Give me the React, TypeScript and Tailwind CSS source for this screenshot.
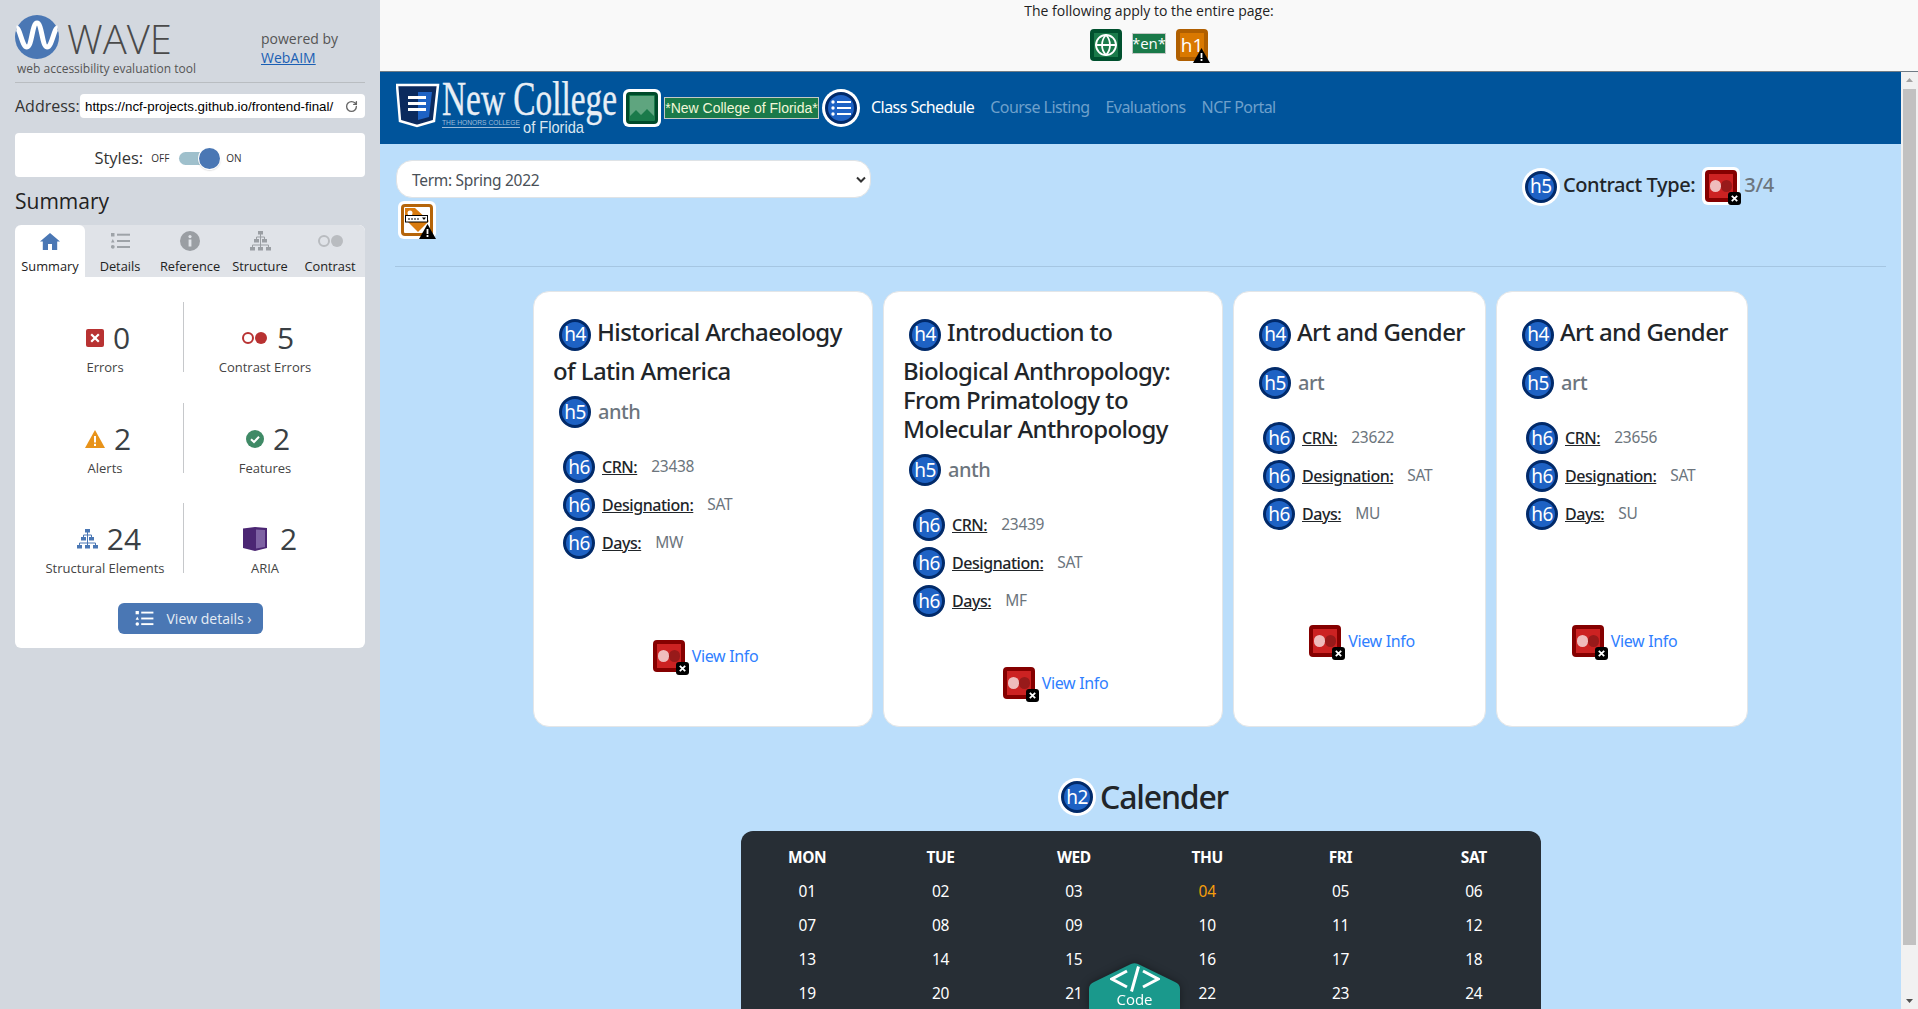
import { Globe, RotateCw } from "lucide-react"

const heads = ["MON", "TUE", "WED", "THU", "FRI", "SAT"]
const weeks = [
  ["01", "02", "03", "04", "05", "06"],
  ["07", "08", "09", "10", "11", "12"],
  ["13", "14", "15", "16", "17", "18"],
  ["19", "20", "21", "22", "23", "24"],
  ["25", "26", "27", "28", "29", "30"],
]

const courses = [
  { title: "Historical Archaeology of Latin America", cat: "anth", crn: "23438", days: "MW", width: "w-[340px]", linkGap: "mt-[75px]" },
  { title: "Introduction to Biological Anthropology: From Primatology to Molecular Anthropology", cat: "anth", crn: "23439", days: "MF", width: "w-[340px]", linkGap: "mt-[44px]" },
  { title: "Art and Gender", cat: "art", crn: "23622", days: "MU", width: "w-[253px]", linkGap: "mt-[89px]" },
  { title: "Art and Gender", cat: "art", crn: "23656", days: "SU", width: "w-[252px]", linkGap: "mt-[89px]" },
]

const HeadIcon = ({ level }: { level: string }) => (
  <span className="flex w-[38px] h-[38px] shrink-0 items-center justify-center rounded-full bg-white">
    <span className="flex w-[32px] h-[32px] items-center justify-center rounded-full border-[3px] border-[#012a6a] bg-[#1e62c4] text-[19px] font-normal leading-none tracking-[-0.5px] text-white">
      {level}
    </span>
  </span>
)

const WarnBadge = () => (
  <svg viewBox="0 0 17 15" className="absolute right-[-6px] bottom-[-6px] w-[17px] h-[15px]">
    <path d="M8.5 0 L17 15 L0 15 Z" fill="#000" />
    <rect x="7.6" y="5" width="1.8" height="5" fill="#fff" />
    <rect x="7.6" y="11" width="1.8" height="2" fill="#fff" />
  </svg>
)

const ContrastIcon = () => (
  <span className="relative flex w-[38px] h-[38px] shrink-0 items-center justify-center rounded-[6px] bg-white">
    <span className="flex w-[32px] h-[32px] items-center justify-between rounded-[4px] border-[4px] border-[#850000] bg-[#cc2222] px-[1px]">
      <span className="w-[12px] h-[12px] rounded-full bg-[#efbcbc]" />
      <span className="w-[12px] h-[12px] rounded-full bg-[#981a1a]" />
    </span>
    <span className="absolute right-[-1px] bottom-0 flex w-[13px] h-[13px] items-center justify-center rounded-[3px] bg-black">
      <svg viewBox="0 0 10 10" className="w-[9px] h-[9px]">
        <path d="M2 2 L8 8 M8 2 L2 8" stroke="#fff" strokeWidth="2" />
      </svg>
    </span>
  </span>
)

const ImageIcon = () => (
  <span className="flex w-[38px] h-[38px] shrink-0 items-center justify-center rounded-[6px] bg-white">
    <span className="flex w-[32px] h-[32px] items-center justify-center rounded-[4px] border-[3px] border-[#004a2a] bg-[#1a7a4a]">
      <svg viewBox="0 0 24 24" className="w-[24px] h-[24px]">
        <rect x="0" y="0" width="24" height="24" fill="#5fa57f" />
        <path d="M0 24 V20 L6 14 L11 19 L17 13 L24 20 V24 Z" fill="#1a7a4a" />
      </svg>
    </span>
  </span>
)

const ListIcon = () => (
  <span className="flex w-[38px] h-[38px] shrink-0 items-center justify-center rounded-full bg-white">
    <span className="flex w-[32px] h-[32px] items-center justify-center rounded-full border-[3px] border-[#012a6a] bg-[#1e62c4]">
      <svg viewBox="0 0 20 16" className="w-[20px] h-[16px]">
        <circle cx="2" cy="2" r="1.7" fill="#fff" />
        <circle cx="2" cy="8" r="1.7" fill="#fff" />
        <circle cx="2" cy="14" r="1.7" fill="#fff" />
        <rect x="6" y="1" width="14" height="2" fill="#fff" />
        <rect x="6" y="7" width="14" height="2" fill="#fff" />
        <rect x="6" y="13" width="14" height="2" fill="#fff" />
      </svg>
    </span>
  </span>
)

const SelectFlagIcon = () => (
  <span className="relative flex w-[38px] h-[38px] items-center justify-center rounded-[6px] bg-white">
    <span className="flex w-[32px] h-[32px] items-center justify-center rounded-[4px] border-[3px] border-[#b5650a] bg-white">
      <svg viewBox="0 0 26 26" className="w-[26px] h-[26px]">
        <path d="M1 1 H11 L25 14 L14 25 L1 12 Z" fill="#d97b0f" />
        <circle cx="6" cy="6" r="2.5" fill="#fff" />
        <rect x="1.5" y="8.5" width="22" height="6.5" fill="#fff" stroke="#000" strokeWidth="1" />
        <path d="M4 12 H16" stroke="#000" strokeWidth="1" strokeDasharray="2 1" />
        <path d="M18 10.5 H22 L20 13 Z" fill="#000" />
      </svg>
    </span>
    <svg viewBox="0 0 17 15" className="absolute right-0 bottom-0 w-[17px] h-[15px]">
      <path d="M8.5 0 L17 15 L0 15 Z" fill="#000" />
      <rect x="7.6" y="5" width="1.8" height="5" fill="#fff" />
      <rect x="7.6" y="11" width="1.8" height="2" fill="#fff" />
    </svg>
  </span>
)

const SiteMap = ({ color, className }: { color: string; className: string }) => (
  <svg viewBox="0 0 21 20" className={className}>
    <g fill={color}>
      <rect x="8" y="0" width="5" height="3.5" />
      <rect x="4" y="8" width="5" height="3.5" />
      <rect x="12" y="8" width="5" height="3.5" />
      <rect x="0" y="16" width="5" height="3.5" />
      <rect x="8" y="16" width="5" height="3.5" />
      <rect x="16" y="16" width="5" height="3.5" />
    </g>
    <path d="M10.5 3 V6 M6.5 8 V6 H14.5 V8 M10.5 6 V16 M2.5 16 V14 H18.5 V16" stroke={color} strokeWidth="1" fill="none" />
  </svg>
)

const DetailList = ({ color, className }: { color: string; className: string }) => (
  <svg viewBox="0 0 19 16" className={className}>
    <g fill={color}>
      <rect x="0" y="0" width="3.5" height="3.5" />
      <path d="M1.8 6 L3.6 9.4 H0 Z" />
      <circle cx="1.8" cy="13.8" r="1.9" />
      <rect x="6" y="0.7" width="13" height="2" />
      <rect x="6" y="7" width="13" height="2" />
      <rect x="6" y="13" width="13" height="2" />
    </g>
  </svg>
)

const tabs = [
  {
    label: "Summary",
    icon: (
      <svg viewBox="0 0 20 17" className="w-[20px] h-[17px]">
        <path d="M10 0 L20 8.5 H17.2 V17 H12 V11 H8 V17 H2.8 V8.5 H0 Z" fill="#4a77b4" />
      </svg>
    ),
  },
  { label: "Details", icon: <DetailList color="#9ea3a8" className="w-[19px] h-[16px]" /> },
  {
    label: "Reference",
    icon: (
      <svg viewBox="0 0 20 20" className="w-[20px] h-[20px]">
        <circle cx="10" cy="10" r="10" fill="#9a9ea3" />
        <rect x="8.6" y="8.5" width="2.8" height="7" fill="#e0e3e8" />
        <circle cx="10" cy="5.6" r="1.6" fill="#e0e3e8" />
      </svg>
    ),
  },
  { label: "Structure", icon: <SiteMap color="#9a9ea3" className="w-[21px] h-[20px]" /> },
  {
    label: "Contrast",
    icon: (
      <span className="flex items-center gap-[1px]">
        <span className="w-[12px] h-[12px] rounded-full border-[2px] border-[#b9bcc0]" />
        <span className="w-[12px] h-[12px] rounded-full bg-[#b9bcc0]" />
      </span>
    ),
  },
]

const stats = [
  {
    label: "Errors",
    value: "0",
    row: "gap-[9px] pl-[6px]",
    icon: (
      <span className="flex w-[18px] h-[18px] items-center justify-center rounded-[2px] bg-[#b83232]">
        <svg viewBox="0 0 10 10" className="w-[10px] h-[10px]">
          <path d="M1.2 1.2 L8.8 8.8 M8.8 1.2 L1.2 8.8" stroke="#fff" strokeWidth="2.2" />
        </svg>
      </span>
    ),
  },
  {
    label: "Contrast Errors",
    value: "5",
    row: "gap-[10px] pl-[6px]",
    icon: (
      <span className="flex items-center gap-[1px]">
        <span className="w-[12px] h-[12px] rounded-full border-[2px] border-[#b83232]" />
        <span className="w-[12px] h-[12px] rounded-full bg-[#b83232]" />
      </span>
    ),
  },
  {
    label: "Alerts",
    value: "2",
    row: "gap-[9px] pl-[6px]",
    icon: (
      <svg viewBox="0 0 20 18" className="w-[20px] h-[18px]">
        <path d="M10 0 L20 18 H0 Z" fill="#e8931a" />
        <rect x="9" y="6" width="2" height="6.5" fill="#fff" />
        <rect x="9" y="13.8" width="2" height="2.2" fill="#fff" />
      </svg>
    ),
  },
  {
    label: "Features",
    value: "2",
    row: "gap-[9px] pl-[6px]",
    icon: (
      <svg viewBox="0 0 18 18" className="w-[18px] h-[18px]">
        <circle cx="9" cy="9" r="9" fill="#3f8a66" />
        <path d="M5 9.2 L8 12 L13 6.8" stroke="#fff" strokeWidth="2" fill="none" />
      </svg>
    ),
  },
  {
    label: "Structural Elements",
    value: "24",
    row: "gap-[9px] pl-[8px]",
    icon: <SiteMap color="#4a77b4" className="w-[21px] h-[20px]" />,
  },
  {
    label: "ARIA",
    value: "2",
    row: "gap-[13px] pl-[10px]",
    icon: (
      <svg viewBox="0 0 24 24" className="w-[24px] h-[24px]">
        <path d="M0 1.5 L12 0 L24 1 V21 L12 24 L0 21 Z" fill="#4b2673" />
        <path d="M13 2.5 L22 3 V20 L13 21.5 Z" fill="#7e62a3" />
      </svg>
    ),
  },
]

const Sidebar = () => (
  <aside className="flex w-[380px] shrink-0 flex-col bg-[#d3d8df] px-[15px] pt-[15px] font-['Open_Sans',sans-serif] text-[#333]">
    <div className="flex h-[68px] border-b border-[#b9bdc1]">
      <div className="w-[246px]">
        <div className="flex items-center">
          <svg viewBox="0 0 44 44" className="w-[44px] h-[44px]">
            <circle cx="22" cy="22" r="22" fill="#4a77b4" />
            <path d="M1.5 13 C5 13 7 32 12 32 C17 32 17 8 22 8 C27 8 27 32 32 32 C37 32 39 13 42.5 13" stroke="#fff" strokeWidth="5" fill="none" />
          </svg>
          <span className="ml-[8px] mt-[3px] text-[40px] font-light leading-none text-[#4a4a4a]">WAVE</span>
        </div>
        <p className="ml-[2px] text-[12px] leading-[19px] text-[#555]">web accessibility evaluation tool</p>
      </div>
      <div className="pt-[14px] text-[14px] leading-[19px] text-[#555]">
        <p>powered by</p>
        <a className="text-[#1a5fb4] underline">WebAIM</a>
      </div>
    </div>

    <div className="mt-[11px] flex items-center justify-between">
      <span className="text-[16px] leading-[24px]">Address:</span>
      <div className="flex h-[24px] w-[285px] items-center justify-between rounded-[4px] bg-white pl-[5px] pr-[7px] pt-[1px]">
        <span className="font-['Liberation_Sans',sans-serif] text-[13.33px] text-black">https://ncf-projects.github.io/frontend-final/</span>
        <RotateCw size={13} color="#666" strokeWidth={2.5} />
      </div>
    </div>

    <div className="mt-[15px] flex h-[44px] items-center justify-center rounded-[4px] bg-white pr-[44px] pt-[6px]">
      <span className="text-[16.5px]">Styles:</span>
      <span className="ml-[8px] text-[10px]">OFF</span>
      <span className="relative ml-[10px] h-[13px] w-[41px] rounded-full bg-[#9fc0cc]">
        <span className="absolute right-0 top-[-4px] h-[21px] w-[21px] rounded-full bg-[#4a77b4] shadow-[0_0_0_1px_#fff,0_1px_2px_rgba(0,0,0,.4)]" />
      </span>
      <span className="ml-[6px] text-[10px]">ON</span>
    </div>

    <h2 className="mt-[10px] text-[21px] leading-[29px] text-[#222]">Summary</h2>

    <div className="mt-[9px] overflow-hidden rounded-[6px] bg-white">
      <div className="flex h-[52px] bg-[#e0e3e8]">
        {tabs.map((t, i) => (
          <div key={t.label} className={`flex w-[70px] flex-col items-center ${i === 0 ? "rounded-t-[6px] bg-white" : ""}`}>
            <div className="flex h-[33px] items-center pt-[2px] pb-[3px]">{t.icon}</div>
            <span className="whitespace-nowrap text-[12.8px] leading-[16px] text-[#222]">{t.label}</span>
          </div>
        ))}
      </div>
      <div className="ml-[12px] mt-[25px] grid grid-cols-[157px_162px] gap-y-[30.5px]">
        {stats.map((s, i) => (
          <div key={s.label} className={`flex h-[70px] flex-col items-center pt-[18px] ${i % 2 === 0 ? "border-r border-[#c6c8cb]" : ""}`}>
            <div className={`flex h-[36px] items-center ${s.row}`}>
              {s.icon}
              <span className="text-[30px] leading-[36px] text-[#3a3f44]">{s.value}</span>
            </div>
            <span className="mt-[2px] text-[13px] leading-[18px] text-[#444]">{s.label}</span>
          </div>
        ))}
      </div>
      <button className="mx-auto mb-[14px] mt-[30px] flex h-[31px] w-[145px] items-center rounded-[6px] bg-[#4a77b4] pl-[17px] text-[14px] text-[#e6edf5]">
        <DetailList color="#fff" className="w-[19px] h-[15px]" />
        <span className="ml-[13px]">View details ›</span>
      </button>
    </div>
  </aside>
)

const CourseCard = ({ c }: { c: (typeof courses)[number] }) => (
  <article className={`${c.width} h-[436px] rounded-2xl border border-[#e3e6e8] bg-white px-[19px] pt-[21px]`}>
    <h4 className="text-[24px] font-medium leading-[29px] tracking-[-0.6px] text-[#212529]">
      <span className="my-[2.5px] ml-[3px] mr-[3px] inline-flex align-middle">
        <HeadIcon level="h4" />
      </span>
      {c.title}
    </h4>
    <div className="ml-[3px] mt-[8px] flex items-center gap-[4px]">
      <HeadIcon level="h5" />
      <span className="text-[20px] font-medium tracking-[-0.5px] text-[#6c757d]">{c.cat}</span>
    </div>
    <div className="ml-[7px] mt-[17px] flex flex-col">
      {[
        ["CRN:", c.crn],
        ["Designation:", "SAT"],
        ["Days:", c.days],
      ].map(([k, v]) => (
        <div key={k} className="flex h-[38px] items-center gap-[4px]">
          <HeadIcon level="h6" />
          <span className="text-[16px] font-medium tracking-[-0.45px] text-[#212529] underline">{k}</span>
          <span className="ml-[10px] text-[15.5px] tracking-[-0.3px] text-[#6c757d]">{v}</span>
        </div>
      ))}
    </div>
    <div className={`${c.linkGap} flex items-center justify-center gap-[4px] pl-[2px]`}>
      <ContrastIcon />
      <a className="text-[16px] tracking-[-0.35px] text-[#2f80ff]">View Info</a>
    </div>
  </article>
)

const Calendar = () => (
  <section className="mx-auto mt-[15px] w-[800px] rounded-t-xl bg-[#272e35] pb-[20px] pt-[10px] text-white">
    <div className="grid grid-cols-6">
      {heads.map((h) => (
        <div key={h} className="flex h-[34px] items-center justify-center text-[15.5px] font-bold tracking-[-0.4px]">{h}</div>
      ))}
      {weeks.flat().map((d) => (
        <div key={d} className={`flex h-[34px] items-center justify-center text-[15.5px] tracking-[-0.3px] ${d === "04" ? "text-[#f59e0b]" : ""}`}>{d}</div>
      ))}
    </div>
  </section>
)

export default function App() {
  return (
    <div className="flex h-screen w-full overflow-hidden bg-[#d3d8df] font-['Noto_Sans',sans-serif]">
      <Sidebar />
      <main className="relative flex min-w-0 flex-1 flex-col">
        <div className="h-[72px] shrink-0 border-b border-[#6f7b85] bg-[#f9f9f9] text-center font-['Open_Sans',sans-serif]">
          <p className="pt-[1px] text-[14px] leading-[19px] text-[#222]">The following apply to the entire page:</p>
          <div className="mt-[9px] flex items-start justify-center">
            <span className="flex w-[32px] h-[32px] items-center justify-center rounded-[4px] border-[4px] border-[#00502e] bg-[#1a7a4a]">
              <Globe size={24} color="#fff" strokeWidth={1.8} />
            </span>
            <span className="ml-[10px] mt-[4px] flex h-[21px] w-[34px] items-center justify-center border border-[#c5c9c6] bg-[#1a7a4a] text-[15px] leading-none text-white">*en*</span>
            <span className="relative ml-[10px] flex w-[32px] h-[32px] items-center justify-center rounded-[4px] border-[4px] border-[#b05f00] bg-[#d97800] text-[19px] leading-none text-white">
              h1
              <WarnBadge />
            </span>
          </div>
        </div>

        <div className="flex min-h-0 flex-1">
          <div className="min-w-0 flex-1 overflow-hidden bg-[#bbdefb]">
            <header className="flex h-[72px] items-center bg-[#00549b] pl-[16px]">
              <svg viewBox="0 0 222 54" className="w-[222px] h-[54px]">
                <path d="M1 4 H42 L38 40 L21 45 L4 40 Z" fill="#0b2a5e" stroke="#fff" strokeWidth="2.5" />
                <path d="M22 11 H36 L33 36 L22 39 Z" fill="#1e62c4" />
                <rect x="12" y="15" width="18" height="3" fill="#fff" />
                <rect x="12" y="21" width="18" height="3" fill="#fff" />
                <rect x="12" y="27" width="18" height="3" fill="#fff" />
                <text x="46" y="34" fontFamily="Liberation Serif" fontSize="48" fill="#e8eef5" stroke="#e8eef5" strokeWidth="0.4" textLength="175" lengthAdjust="spacingAndGlyphs">New College</text>
                <text x="46" y="44" fontFamily="Liberation Sans" fontSize="6.5" fill="#9dbbd8" textLength="78" lengthAdjust="spacingAndGlyphs">THE HONORS COLLEGE</text>
                <rect x="46" y="46" width="78" height="1" fill="#9dbbd8" />
                <text x="127" y="52" fontFamily="Liberation Sans" fontSize="17" fill="#dbe6f0" textLength="61" lengthAdjust="spacingAndGlyphs">of Florida</text>
              </svg>
              <span className="ml-[5px]"><ImageIcon /></span>
              <span className="ml-[3px] flex h-[22px] w-[155px] items-center justify-center border border-[#c5c9c6] bg-[#1a7a4a] font-['Liberation_Sans',sans-serif] text-[14px] leading-none text-[#f2f7d8]">*New College of Florida*</span>
              <span className="ml-[3px]"><ListIcon /></span>
              <nav className="mb-[2px] ml-[11px] flex items-center gap-[16px] text-[16px] tracking-[-0.55px]">
                <a className="text-white">Class Schedule</a>
                <a className="text-[#6ea0cb]">Course Listing</a>
                <a className="text-[#6ea0cb]">Evaluations</a>
                <a className="text-[#6ea0cb]">NCF Portal</a>
              </nav>
            </header>

            <div className="ml-[15px] mr-[15px] mt-[16px] flex h-[107px] items-start justify-between border-b border-[#a5c6e2]">
              <div className="ml-[1px] w-[475px]">
                <div className="flex h-[38px] items-center justify-between rounded-2xl border border-[#dfe3e6] bg-white pl-[15px] pr-[4px] pt-[4px] text-[15.5px] tracking-[-0.3px] text-[#495057]">
                  <span>Term: Spring 2022</span>
                  <svg viewBox="0 0 10 7" className="mb-[4px] w-[10px] h-[7px]">
                    <path d="M1 1.5 L5 5.5 L9 1.5" stroke="#333" strokeWidth="2" fill="none" />
                  </svg>
                </div>
                <div className="ml-[2px] mt-[3px]"><SelectFlagIcon /></div>
              </div>
              <div className="mr-[112px] mt-[7px] flex items-center">
                <HeadIcon level="h5" />
                <span className="mb-[4px] ml-[3px] text-[20px] font-medium tracking-[-0.4px] text-[#212529]">Contract Type:</span>
                <span className="mb-[1px] ml-[7px]"><ContrastIcon /></span>
                <span className="mb-[4px] ml-[4px] text-[20px] font-medium tracking-[-0.3px] text-[#6c757d]">3/4</span>
              </div>
            </div>

            <div className="mt-[24px] flex justify-center gap-[10px]">
              {courses.map((c) => (
                <CourseCard key={c.crn} c={c} />
              ))}
            </div>

            <h2 className="ml-[5px] mt-[51px] flex items-center justify-center gap-[4px] text-[32px] font-medium leading-[38px] tracking-[-1.2px] text-[#212529]">
              <HeadIcon level="h2" />
              Calender
            </h2>
            <Calendar />
          </div>

          <div className="flex w-[17px] shrink-0 flex-col bg-[#f1f1f1]">
            <svg viewBox="0 0 17 17" className="w-[17px] h-[17px]">
              <path d="M5 10 L8.5 6 L12 10 Z" fill="#a3a3a3" />
            </svg>
            <div className="mx-[2px] h-[856px] bg-[#c1c1c1]" />
            <svg viewBox="0 0 17 17" className="mt-auto w-[17px] h-[17px]">
              <path d="M5 7 L12 7 L8.5 11 Z" fill="#505050" />
            </svg>
          </div>
        </div>

        <div className="absolute bottom-0 left-[709px] h-[46px] w-[91px] drop-shadow-[0_0_4px_rgba(0,0,0,.4)]">
          <svg viewBox="0 0 91 46" className="absolute inset-0 w-[91px] h-[46px]">
            <path d="M0 46 V26 Q0 21 5 19 L42 1 Q45.5 -0.5 49 1 L86 19 Q91 21 91 26 V46 Z" fill="#1a998c" />
          </svg>
          <div className="relative flex flex-col items-center pt-[3px] font-['Open_Sans',sans-serif] text-white">
            <svg viewBox="0 0 50 26" className="w-[50px] h-[26px]">
              <path d="M17 5 L2 13 L17 21 M33 5 L48 13 L33 21 M28.5 0.5 L21.5 25.5" stroke="#fff" strokeWidth="3" fill="none" />
            </svg>
            <span className="text-[15px] leading-[15px]">Code</span>
          </div>
        </div>
      </main>
    </div>
  )
}
